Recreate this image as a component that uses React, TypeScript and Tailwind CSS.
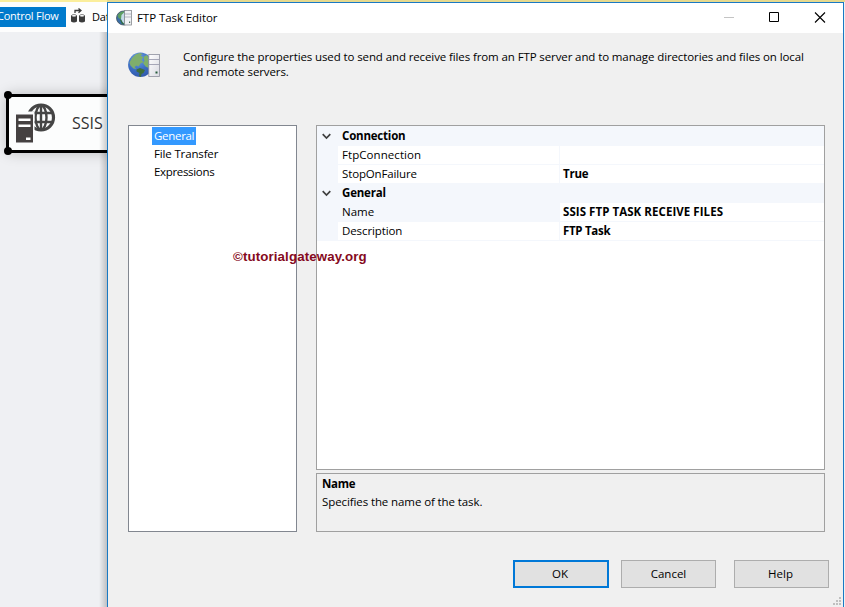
import { ReactNode } from 'react'

type Row = { label: string; value: string; selected?: boolean; labelClass: string; valueClass: string }

const connectionRows: Row[] = [
  { label: 'FtpConnection', value: '', labelClass: 'tracking-[0.07px]', valueClass: '' },
  { label: 'StopOnFailure', value: 'True', labelClass: 'tracking-[-0.14px]', valueClass: 'tracking-[-0.2px]' },
]

const generalRows: Row[] = [
  { label: 'Name', value: 'SSIS FTP TASK RECEIVE FILES', selected: true, labelClass: '', valueClass: 'tracking-[0.06px]' },
  { label: 'Description', value: 'FTP Task', labelClass: 'tracking-[-0.1px]', valueClass: 'tracking-[-0.3px]' },
]

function GlobeServerIcon({ className }: { className: string }) {
  return (
    <svg className={className} viewBox="0 0 32 26" preserveAspectRatio="none">
      <defs>
        <radialGradient id="sea" cx="0.4" cy="0.25" r="0.8">
          <stop offset="0" stopColor="#6fa3e6" />
          <stop offset="0.6" stopColor="#3b6cc2" />
          <stop offset="1" stopColor="#3058a8" />
        </radialGradient>
        <linearGradient id="case" x1="0" x2="1" y1="0" y2="1">
          <stop offset="0" stopColor="#ffffff" />
          <stop offset="1" stopColor="#d9dae2" />
        </linearGradient>
      </defs>
      <circle cx="12.3" cy="12.8" r="12.2" fill="url(#sea)" />
      <path d="M1.500 10.500 4 6l3.500-3.500 4-1.500 3 1-2 1.500 2.500 1.500-1.500 3 2 2-3 1.500-2 3-2-1-2 1.500 2 2-3-.500-3-3z" fill="#7fae6c" />
      <path d="m8.500 17.500 3.500-1.500 5 2-1.500 3-2 1-.500 3-2-1 .500-3-3-1.500z" fill="#3f6f3a" />
      <path d="m15.500 5 3-2 2 2v11l-3-1.500-2.500-3.500 1.500-2z" fill="#7fb069" />
      <rect x="20.800" y="2.500" width="10.700" height="22" fill="url(#case)" stroke="#8d8f9d" strokeWidth="0.8" />
      <path d="M21 7.500h10M21 12.500h10" stroke="#a6a7b8" strokeWidth="1.100" />
      <rect x="27.500" y="19.500" width="2" height="2" fill="#245a3a" />
    </svg>
  )
}

// Title bar variant, the server stands in front of the globe
function SmallGlobeServerIcon() {
  return (
    <svg className="h-4 w-4" viewBox="0 0 16 16">
      <circle cx="7.500" cy="8" r="7" fill="#3a6ea8" stroke="#46545c" strokeWidth="0.8" />
      <path d="M1.500 5.500 4 2.500l4-1.300v4L6 7 5 9.500 2.500 8z" fill="#5d9e5f" />
      <path d="m4 10 3-1 2 1v4.500l-3-.500z" fill="#2f6b46" />
      <path d="m5.500 5 3-3v12l-2-2-1.500-3z" fill="#c5dbe8" />
      <rect x="8.500" y=".500" width="7" height="14.500" fill="#f1f2f5" stroke="#85898f" strokeWidth="0.8" />
      <path d="M9 4h6M9 7h6" stroke="#b3b6c0" />
      <rect x="13" y="11.500" width="1.200" height="1.500" fill="#4d6f5a" />
    </svg>
  )
}

function DataFlowIcon() {
  return (
    <svg className="h-4 w-4" viewBox="0 0 16 16">
      <path d="M1 7.500h6v6q-3 2-6 0zM9 7.500h6v6q-3 2-6 0z" fill="#3b3b3b" />
      <ellipse cx="4" cy="7.700" rx="2.300" ry="1.200" fill="#fff" stroke="#3b3b3b" strokeWidth="0.6" />
      <ellipse cx="12" cy="7.700" rx="2.300" ry="1.200" fill="#fff" stroke="#3b3b3b" strokeWidth="0.6" />
      <path d="M5 5V2.500h6M8.500 .500l2.500 2-2.500 2.300" fill="none" stroke="#3b3b3b" strokeWidth="1.300" />
    </svg>
  )
}

function TaskIcon() {
  return (
    <svg className="absolute left-[14px] top-[100px] h-[42px] w-[42px]" viewBox="0 0 42 42">
      <circle cx="27" cy="15.500" r="12.500" fill="none" stroke="#454545" strokeWidth="3.200" />
      <ellipse cx="27" cy="15.500" rx="5.500" ry="12" fill="none" stroke="#454545" strokeWidth="2.400" />
      <path d="M27 3v25M15 11h24M15 20h24" stroke="#454545" strokeWidth="2.400" />
      <path d="M0 9.500h20.500v33H0z" fill="#fbfcfd" />
      <path d="M2 12.500h17v28H2z" fill="#454141" />
      <path d="M4.500 16.500h12v2.500h-12zM4.500 22.500h12v2.500h-12zM12 35.500h4.500v2.500h-4.500z" fill="#fff" />
    </svg>
  )
}

function Category({ name, children }: { name: string; children: ReactNode }) {
  return (
    <div>
      <div className="flex h-[19px] items-center bg-[#f4f7fc]">
        <svg className="ml-[5px] h-[9px] w-[9px]" viewBox="0 0 9 9">
          <path d="m.7 2.200 3.800 3.800 3.800-3.800" fill="none" stroke="#404040" strokeWidth="1.700" />
        </svg>
        <span className="ml-[11px] pb-[2px] font-bold tracking-[-0.2px]">{name}</span>
      </div>
      {children}
    </div>
  )
}

function PropertyRow({ row }: { row: Row }) {
  return (
    <div className="flex h-[19px] bg-[#f4f7fc] pl-[21px] pb-px">
      <span className={`w-[221px] pl-1 leading-[18px] ${row.selected ? '' : 'bg-white'} ${row.labelClass}`}>{row.label}</span>
      <span className={`ml-px flex-1 bg-white pl-[3px] font-bold leading-[18px] ${row.valueClass}`}>{row.value}</span>
    </div>
  )
}

export default function App() {
  return (
    <div className="h-[607px] w-[845px] overflow-hidden bg-[#eff0f3] font-['Open_Sans',sans-serif] text-[11.5px] leading-[15px] text-black">
      <div className="flex h-[2px] bg-[#e6d98e]">
        <div className="w-[107px] bg-[#fbee9c]" />
      </div>
      <div className="flex h-[605px]">
        {/* Designer behind the dialog */}
        <div className="relative w-[107px] shrink-0 overflow-hidden">
          <div className="flex h-[30px] items-center bg-[#fdfdfd]">
            <div className="h-5 w-[66px] shrink-0 bg-[#007acc] text-white">
              <span className="-ml-[3px] block whitespace-nowrap text-[11px] leading-[17px] tracking-[-0.25px]">Control Flow</span>
            </div>
            <div className="-mt-[2px] ml-1 shrink-0"><DataFlowIcon /></div>
            <span className="-mt-[2px] ml-[6px] whitespace-nowrap text-[11px] tracking-[-0.2px]">Data</span>
          </div>
          <div className="absolute left-[6px] top-[92px] h-[59px] w-[140px] rounded-[5px] border-[3px] border-black bg-[#fcfdfd] shadow-[0_0_14px_rgba(0,0,0,0.22)]" />
          <div className="absolute left-[4px] top-[89px] h-2 w-2 rounded-full bg-black" />
          <div className="absolute left-[4px] top-[145px] h-2 w-2 rounded-full bg-black" />
          <TaskIcon />
          <span className="absolute left-[72px] top-[111px] text-[16px] leading-5 text-[#333]">SSIS</span>
          <div className="absolute right-0 top-[30px] h-full w-2 bg-linear-to-l from-black/20 to-transparent" />
        </div>

        {/* Dialog */}
        <div className="flex w-[737px] shrink-0 flex-col border border-b-0 border-[#1979c4] bg-[#f0f0f0]">
          <div className="flex h-[30px] shrink-0 items-center bg-white pl-2">
            <SmallGlobeServerIcon />
            <span className="ml-[5px] pb-px tracking-[-0.07px]">FTP Task Editor</span>
            <svg className="ml-auto mr-4 mb-[2px] h-[11px] w-[103px]" viewBox="0 0 103 11">
              <path d="M0 5.500h10" stroke="#c4c4c4" />
              <path d="M45.500.500h9v9h-9z" fill="none" stroke="#000" />
              <path d="m91 .500 10 10m0-10-10 10" stroke="#000" strokeWidth="1.100" />
            </svg>
          </div>

          <div className="flex h-[92px] shrink-0 pl-5 pt-4">
            <GlobeServerIcon className="mt-[3px] h-[26px] w-8" />
            <p className="ml-[23px] w-[640px] tracking-[-0.11px]">
              Configure the properties used to send and receive files from an FTP server and to manage directories and files on local
              <br />
              and remote servers.
            </p>
          </div>

          <div className="relative flex h-[407px] shrink-0 gap-[19px] pl-5">
            <ul className="w-[169px] border border-[#828790] bg-white pl-[23px] pt-px leading-[18px]">
              <li><span className="inline-block h-[18px] w-11 bg-[#3399ff] pl-[2px] tracking-[-0.3px] text-white">General</span></li>
              <li className="pl-[2px] tracking-[-0.15px]">File Transfer</li>
              <li className="pl-[2px] tracking-[-0.33px]">Expressions</li>
            </ul>
            <div className="flex w-[509px] flex-col gap-[3px]">
              <div className="h-[345px] border border-[#a0a0a0] bg-white">
                <div className="h-px bg-[#f4f7fc]" />
                <Category name="Connection">
                  {connectionRows.map((row) => <PropertyRow key={row.label} row={row} />)}
                </Category>
                <Category name="General">
                  {generalRows.map((row) => <PropertyRow key={row.label} row={row} />)}
                </Category>
              </div>
              <div className="h-[59px] border border-[#a0a0a0] pl-[5px] pt-[2px]">
                <p className="font-bold tracking-[-0.3px]">Name</p>
                <p className="mt-[3px] tracking-[-0.1px]">Specifies the name of the task.</p>
              </div>
            </div>
            <span className="absolute left-[125px] top-[124px] font-['Liberation_Sans',sans-serif] text-[13.3px] font-bold tracking-[0.12px] text-[#850a20]">
              ©tutorialgateway.org
            </span>
          </div>

          <div className="flex pl-[405px] pt-7">
            <button className="h-7 w-24 border-2 border-[#0078d7] bg-[#e1e1e1] pb-[2px] pr-[2px]">OK</button>
            <button className="ml-3 h-7 w-[95px] border border-[#adadad] bg-[#e1e1e1] pb-[2px]">Cancel</button>
            <button className="ml-[18px] h-7 w-[95px] border border-[#adadad] bg-[#e1e1e1] pb-[2px] pr-[2px]">Help</button>
          </div>
          <svg className="mb-[2px] ml-auto mr-[2px] mt-auto h-2 w-2" viewBox="0 0 8 8">
            <path d="M6 0h2v2H6zM3 3h2v2H3zM6 3h2v2H6zM0 6h2v2H0zM3 6h2v2H3zM6 6h2v2H6z" fill="#bfbfbf" />
          </svg>
        </div>
      </div>
    </div>
  )
}
